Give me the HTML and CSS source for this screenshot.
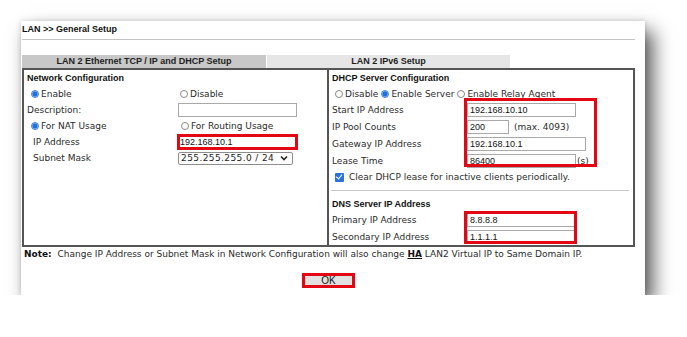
FILE: index.html
```html
<!DOCTYPE html>
<html lang="en">
<head>
    <meta charset="UTF-8">
    <title>LAN General Setup</title>
    <link rel="stylesheet" href="styles.css">
</head>
<body>

<div class="card">
    <div class="page-title">LAN &gt;&gt; General Setup</div>

    <div class="tabs">
        <div class="tab active">LAN 2 Ethernet TCP / IP and DHCP Setup</div>
        <div class="tab">LAN 2 IPv6 Setup</div>
    </div>

    <div class="panels">
        <div class="panel net">
            <div class="head span">Network Configuration</div>

            <label class="opt in-radio"><span class="radio on"></span>Enable</label>
            <label class="opt in-col"><span class="radio"></span>Disable</label>

            <div class="lbl">Description:</div>
            <div><input class="field w-desc" type="text"></div>

            <label class="opt in-radio"><span class="radio on"></span>For NAT Usage</label>
            <label class="opt in-col2"><span class="radio"></span>For Routing Usage</label>

            <div class="lbl sub">IP Address</div>
            <div><input class="field w-ip marked" type="text" value="192.168.10.1"></div>

            <div class="lbl sub">Subnet Mask</div>
            <div>
                <span class="select"><span class="select-text">255.255.255.0 / 24</span><svg width="8" height="6" viewBox="0 0 8 6"><path d="M1 1.5 L4 4.5 L7 1.5" fill="none" stroke="#222" stroke-width="1.6"/></svg></span>
            </div>
        </div>

        <div class="panel dhcp">
            <div class="head span">DHCP Server Configuration</div>

            <div class="opt-row span">
                <label class="opt"><span class="radio"></span>Disable</label>
                <label class="opt"><span class="radio on"></span>Enable Server</label>
                <label class="opt"><span class="radio"></span>Enable Relay Agent</label>
            </div>

            <div class="lbl">Start IP Address</div>
            <div class="val"><input class="field w-109" type="text" value="192.168.10.10"></div>

            <div class="lbl">IP Pool Counts</div>
            <div class="val"><input class="field w-42" type="text" value="200"><span class="hint">(max. 4093)</span></div>

            <div class="lbl">Gateway IP Address</div>
            <div class="val"><input class="field w-119" type="text" value="192.168.10.1"></div>

            <div class="lbl">Lease Time</div>
            <div class="val"><input class="field w-109" type="text" value="86400"><span class="unit">(s)</span></div>

            <label class="check-row span"><span class="checkbox"></span>Clear DHCP lease for inactive clients periodically.</label>

            <div class="rule span"></div>

            <div class="head span">DNS Server IP Address</div>

            <div class="lbl">Primary IP Address</div>
            <div class="val"><input class="field w-108" type="text" value="8.8.8.8"></div>

            <div class="lbl">Secondary IP Address</div>
            <div class="val"><input class="field w-108" type="text" value="1.1.1.1"></div>
        </div>
    </div>

    <div class="note"><b>Note:</b>&nbsp; Change IP Address or Subnet Mask in Network Configuration will also change <b class="ha">HA</b> LAN2 Virtual IP to Same Domain IP.</div>

    <div class="actions">
        <button class="ok-btn" type="button">OK</button>
    </div>

    <!-- red highlight boxes drawn over the form -->
    <div class="mark mark-dhcp"></div>
    <div class="mark mark-dns"></div>
</div>

</body>
</html>
```

FILE: styles.css
```css
body {
    margin: 0;
    background-color: #fff;
    font-family: 'DejaVu Sans', Verdana, sans-serif;
    font-size: 9px;
    color: #2b2b2b;
}

.card {
    position: relative;
    box-sizing: border-box;
    width: 624px;
    height: 274px;
    margin: 21px 0 0 21px;
    padding: 0 10px 0 1px;
    background-color: #fff;
    box-shadow: 8px 10px 18px rgba(0, 0, 0, 0.65), 0 0 5px rgba(0, 0, 0, 0.15);
}

.page-title {
    height: 18px;
    line-height: 17px;
    border-bottom: 1px solid #c4c4c4;
    font-family: 'Liberation Sans', Arial, sans-serif;
    font-weight: bold;
    color: #111;
}

.tabs {
    display: flex;
    gap: 1px;
    margin-top: 15px;
    height: 13px;
}

.tab {
    width: 243px;
    line-height: 13px;
    text-align: center;
    background-color: #e6e6e6;
    font-family: 'Liberation Sans', Arial, sans-serif;
    font-weight: bold;
    color: #1e1e1e;
}

.tab.active {
    width: 244px;
    background-color: #c8c8c8;
}

.panels {
    display: flex;
    border: 1px solid #555;
}

.panel {
    display: grid;
    align-items: center;
    border: 1px solid #555;
}

.panel.net {
    width: 303px;
    grid-template-columns: 154px 1fr;
    grid-template-rows: 16px 16px 15px 17px 16px 16px;
    align-content: start;
}

.panel.dhcp {
    width: 304px;
    grid-template-columns: 135px 1fr;
    grid-template-rows: 16px 15px 17px 17px 17px 17px 16px 11px 15px 17px 17px;
    align-content: start;
}

.span {
    grid-column: 1 / 3;
}

.head {
    padding-left: 3px;
    font-family: 'Liberation Sans', Arial, sans-serif;
    font-weight: bold;
    color: #111;
}

.lbl {
    padding-left: 3px;
    white-space: nowrap;
}

.lbl.sub {
    padding-left: 9px;
}

.opt {
    display: flex;
    align-items: center;
    white-space: nowrap;
}

.in-radio {
    padding-left: 7px;
}

.in-col {
    padding-left: 2px;
}

.in-col2 {
    padding-left: 3px;
}

.opt-row {
    display: flex;
    gap: 3px;
    padding-left: 6px;
}

.radio {
    box-sizing: border-box;
    width: 8px;
    height: 8px;
    margin-right: 2px;
    border: 1px solid #8a8a8a;
    border-radius: 50%;
    background-color: #fff;
}

.radio.on {
    border-color: #3c82e0;
    background: radial-gradient(circle, #1f6fdc 0, #1f6fdc 2.2px, #9cc3f2 2.8px);
}

.field {
    box-sizing: border-box;
    display: block;
    height: 14px;
    margin: 0;
    padding: 0 2px;
    border: 1px solid #a9a9a9;
    font-family: 'Liberation Sans', Arial, sans-serif;
    font-size: 9px;
    color: #111;
    background-color: #fff;
}

.w-desc { width: 119px; }
.w-109 { width: 109px; }
.w-108 { width: 108px; }
.w-119 { width: 119px; }
.w-42 { width: 42px; }

.field.w-ip {
    width: 121px;
    height: 16px;
    margin-left: -1px;
    padding-left: 0;
}

.field.marked {
    border: 3px solid #e30613;
}

.select {
    box-sizing: border-box;
    display: flex;
    align-items: center;
    justify-content: space-between;
    width: 115px;
    height: 13px;
    padding: 0 4px 0 2px;
    border: 1px solid #8d8d8d;
    border-radius: 2px;
    font-size: 9px;
    letter-spacing: 0.4px;
    line-height: 11px;
    color: #222;
    white-space: nowrap;
}

.select-text {
    flex-shrink: 0;
}

.val {
    display: flex;
    align-items: center;
    padding-left: 3px;
}

.hint {
    margin-left: 5px;
}

.unit {
    margin-left: 1px;
}

.check-row {
    display: flex;
    align-items: center;
    padding-left: 6px;
}

.checkbox {
    position: relative;
    box-sizing: border-box;
    width: 9px;
    height: 9px;
    margin-right: 5px;
    border-radius: 1px;
    background-color: #2a73d9;
}

.checkbox::after {
    content: "";
    position: absolute;
    left: 2px;
    top: 0px;
    width: 3px;
    height: 5px;
    border: solid #fff;
    border-width: 0 1.5px 1.5px 0;
    transform: rotate(40deg);
}

.rule {
    margin: 0 4px 0 2px;
    border-top: 1px solid #c8c8c8;
}

.note {
    padding-left: 2px;
    height: 14px;
    line-height: 15px;
    white-space: nowrap;
}

.note b {
    color: #111;
}

.ha {
    text-decoration: underline;
}

.actions {
    display: flex;
    justify-content: center;
    margin-top: 12px;
}

.ok-btn {
    box-sizing: border-box;
    width: 53px;
    height: 15px;
    padding: 0;
    border: 3px solid #e30613;
    background-color: #e1e1e1;
    font-family: 'Liberation Sans', Arial, sans-serif;
    font-size: 10px;
    line-height: 8px;
    color: #111;
}

.mark {
    position: absolute;
    box-sizing: border-box;
    border: 3px solid #e30613;
}

.mark-dhcp {
    left: 443px;
    top: 77px;
    width: 133px;
    height: 69px;
}

.mark-dns {
    left: 443px;
    top: 190px;
    width: 113px;
    height: 33px;
}
```
